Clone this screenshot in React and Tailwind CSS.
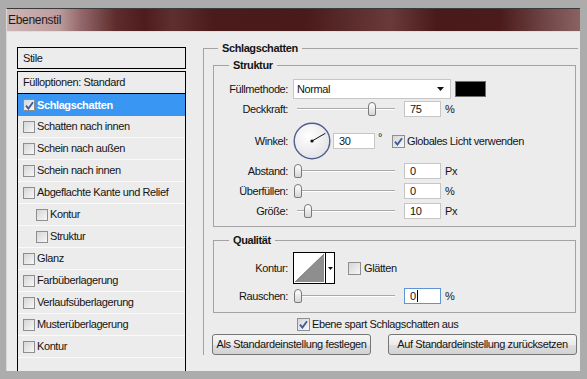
import React from "react";

function Check({ checked, size = "h-[13px] w-[13px]" }) {
  return (
    <span
      className={`flex shrink-0 items-center justify-center border border-[#8c8e90] bg-[linear-gradient(135deg,#d6d6d6,#f7f7f7)] ${size}`}
    >
      {checked && (
        <svg width="9" height="9" viewBox="0 0 9 9">
          <path d="M1 4.6 L3.4 7.6 L8 1.2" fill="none" stroke="#3b5b9c" strokeWidth="1.8" />
        </svg>
      )}
    </span>
  );
}

function Slider({ thumb }) {
  return (
    <div className="relative h-[16px] w-[102px] shrink-0">
      <div className="absolute left-[4px] right-0 top-[7px] h-[2px] border-t border-[#a9a9a9] bg-white" />
      <div
        className={`absolute top-[1px] h-[14px] w-[8px] rounded-t-[4px] rounded-b-[2px] border border-[#7a7a7a] bg-[linear-gradient(#ffffff,#d6d6d6)] ${thumb}`}
      />
    </div>
  );
}

function Field({ value, w = "w-[37px]", focus }) {
  return (
    <div
      className={`flex h-[16px] shrink-0 items-center bg-white pl-[5px] ${w} ${
        focus ? "border border-[#5e93d6]" : "border border-[#c6c6c6]"
      }`}
    >
      {value}
      {focus && <span className="ml-[1px] h-[12px] w-[1px] bg-black" />}
    </div>
  );
}

function Label({ children }) {
  return <div className="w-[75px] shrink-0 pr-[1px] text-right">{children}</div>;
}

function SliderRow({ label, thumb, value, unit, focus, cls }) {
  return (
    <div className={`flex h-[16px] items-center ${cls}`}>
      <Label>{label}</Label>
      <div className="ml-[4px]">
        <Slider thumb={thumb} />
      </div>
      <div className="ml-[9px]">
        <Field value={value} focus={focus} />
      </div>
      <span className="ml-[4px]">{unit}</span>
    </div>
  );
}

const styles = [
  { name: "Schatten nach innen" },
  { name: "Schein nach außen" },
  { name: "Schein nach innen" },
  { name: "Abgeflachte Kante und Relief" },
  { name: "Kontur", sub: true },
  { name: "Struktur", sub: true },
  { name: "Glanz" },
  { name: "Farbüberlagerung" },
  { name: "Verlaufsüberlagerung" },
  { name: "Musterüberlagerung" },
  { name: "Kontur" },
];

export default function App() {
  return (
    <div className="h-[379px] w-[587px] overflow-hidden bg-[#acacac] pb-[8px] pl-[6px] pr-[7px] pt-[8px] font-['Liberation_Sans',Arial,sans-serif] text-[11px] tracking-[-0.4px] text-[#141414]">
      <div className="flex h-full flex-col overflow-hidden border-l border-t border-l-[#d9d9d9] border-t-[#3b3b3b] bg-[#ececec]">
        <div className="flex h-[23px] shrink-0 items-center border-b border-b-[#eadada] bg-[linear-gradient(90deg,#cfb6b6_0%,#bd9d9d_9%,#93676a_13%,#5e2c2c_19%,#4e1c1c_24%,#5f2f2f_29%,#4b1a1a_36%,#4a1a1a_52%,#5b2c2c_60%,#6a3a3a_67%,#4a1a1a_75%,#4b1b1b_86%,#795050_96%,#8a6262_100%)] pl-[1px] text-[12px] tracking-[-0.3px] text-[#1b1b1b]">
          Ebenenstil
        </div>
        <div className="flex min-h-0 flex-1 pl-[10px]">
          <div className="w-[169px] shrink-0 pt-[15px]">
            <div className="flex h-[22px] items-center border border-black pl-[5px]">Stile</div>
            <div className="mt-[2px] h-[400px] border-x border-t border-black">
              <div className="flex h-[22px] items-center border-b border-black pl-[5px]">
                Fülloptionen: Standard
              </div>
              <div className="flex h-[22px] items-center bg-[#3996f2] pl-[5px] font-bold text-white">
                <Check checked size="h-[12px] w-[12px]" />
                <span className="ml-[2px]">Schlagschatten</span>
              </div>
              {styles.map((s, i) => (
                <div
                  key={i}
                  className={`flex h-[22px] items-center border-b border-b-[#fafafa] ${
                    s.sub ? "pl-[18px]" : "pl-[5px]"
                  }`}
                >
                  <Check size="h-[12px] w-[12px]" />
                  <span className="ml-[2px]">{s.name}</span>
                </div>
              ))}
            </div>
          </div>

          <div className="ml-[17px] w-[375px] shrink-0 pt-[10px]">
            <fieldset className="border-l border-t border-[#a3a3a3]">
              <legend className="ml-[14px] px-[4px] font-bold leading-[13px]">Schlagschatten</legend>

              <fieldset className="ml-[9px] mr-[2px] mt-[4px] border border-[#a3a3a3] pb-[7px]">
                <legend className="ml-[15px] px-[4px] font-bold leading-[13px]">Struktur</legend>

                <div className="mt-[7px] flex h-[20px] items-center">
                  <Label>Füllmethode:</Label>
                  <div className="ml-[4px] flex h-[20px] w-[158px] items-center justify-between border border-[#c6c6c6] bg-white pl-[3px] pr-[6px]">
                    <span>Normal</span>
                    <svg width="7" height="4" viewBox="0 0 7 4">
                      <path d="M0 0 H7 L3.5 4 Z" fill="#111" />
                    </svg>
                  </div>
                  <div className="ml-[4px] h-[16px] w-[31px] border border-[#6e6e6e] bg-black" />
                </div>

                <SliderRow label="Deckkraft:" thumb="left-[75px]" value="75" unit="%" cls="mt-[2px]" />

                <div className="mt-[5px] flex h-[38px] items-center">
                  <Label>Winkel:</Label>
                  <svg className="ml-[4px] shrink-0" width="38" height="38" viewBox="0 0 38 38">
                    <defs>
                      <radialGradient id="dial" cx="0.4" cy="0.35" r="0.7">
                        <stop offset="0" stopColor="#ffffff" />
                        <stop offset="1" stopColor="#e2e2e6" />
                      </radialGradient>
                    </defs>
                    <circle cx="19" cy="19" r="17.8" fill="url(#dial)" stroke="#50608c" strokeWidth="1.4" />
                    <line x1="19" y1="19" x2="32.4" y2="11.3" stroke="#111" strokeWidth="1" />
                    <circle cx="19" cy="19" r="1.6" fill="#111" />
                  </svg>
                  <div className="ml-[2px]">
                    <Field value="30" w="w-[42px]" />
                  </div>
                  <span className="ml-[3px] self-start pt-[7px]">°</span>
                  <div className="ml-[10px] flex items-center">
                    <Check checked />
                    <span className="ml-[2px]">Globales Licht verwenden</span>
                  </div>
                </div>

                <SliderRow label="Abstand:" thumb="left-[1px]" value="0" unit="Px" cls="mt-[3px]" />
                <SliderRow label="Überfüllen:" thumb="left-[1px]" value="0" unit="%" cls="mt-[4px]" />
                <SliderRow label="Größe:" thumb="left-[11px]" value="10" unit="Px" cls="mt-[4px]" />
              </fieldset>

              <fieldset className="ml-[9px] mr-[2px] mt-[7px] border border-[#a3a3a3] pb-[8px]">
                <legend className="ml-[15px] px-[4px] font-bold leading-[13px]">Qualität</legend>

                <div className="mt-[5px] flex h-[32px] items-center">
                  <Label>Kontur:</Label>
                  <div className="ml-[4px] flex h-[32px] w-[42px] shrink-0 border border-black bg-white">
                    <svg width="31" height="30" viewBox="0 0 31 30" className="shrink-0">
                      <path d="M1 29 L30 1 L30 29 Z" fill="#8e8e8e" />
                      <line x1="1" y1="29" x2="30" y2="1" stroke="#6a6a6a" strokeWidth="0.8" />
                    </svg>
                    <div className="flex flex-1 items-center justify-center border-l border-black">
                      <svg width="5" height="3" viewBox="0 0 5 3">
                        <path d="M0 0 H5 L2.5 3 Z" fill="#111" />
                      </svg>
                    </div>
                  </div>
                  <div className="ml-[13px] flex items-center">
                    <Check />
                    <span className="ml-[3px]">Glätten</span>
                  </div>
                </div>

                <SliderRow label="Rauschen:" thumb="left-[1px]" value="0" unit="%" focus cls="mt-[4px]" />
              </fieldset>

              <div className="mt-[4px] flex h-[14px] items-center pl-[93px]">
                <Check checked />
                <span className="ml-[2px]">Ebene spart Schlagschatten aus</span>
              </div>

              <div className="mt-[3px] flex">
                <button className="ml-[8px] h-[21px] w-[159px] rounded-[3px] border border-[#767676] bg-[linear-gradient(#f6f6f6,#ebebeb_50%,#dedede_51%,#d3d3d3)]">
                  Als Standardeinstellung festlegen
                </button>
                <button className="ml-[17px] h-[21px] w-[189px] rounded-[3px] border border-[#767676] bg-[linear-gradient(#f6f6f6,#ebebeb_50%,#dedede_51%,#d3d3d3)]">
                  Auf Standardeinstellung zurücksetzen
                </button>
              </div>
            </fieldset>
          </div>
        </div>
      </div>
    </div>
  );
}
